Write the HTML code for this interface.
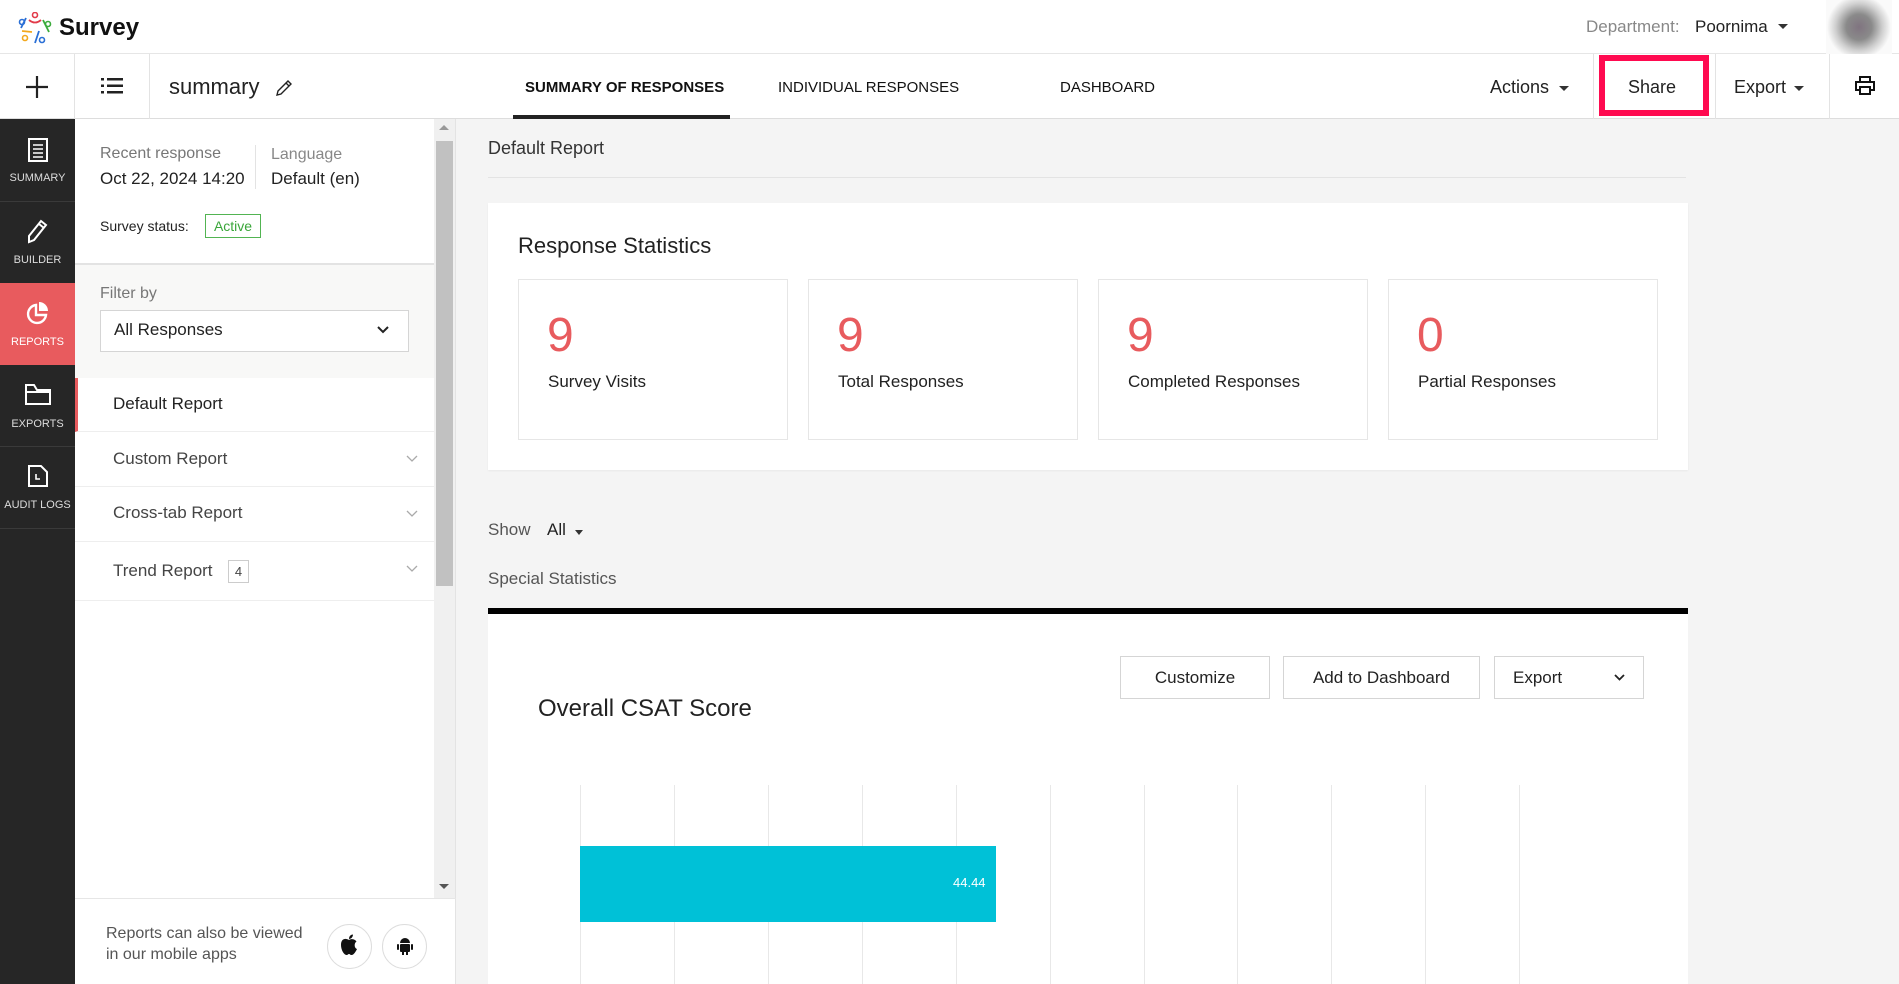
<!DOCTYPE html>
<html><head><meta charset="utf-8"><style>
*{box-sizing:border-box;margin:0;padding:0}
body{width:1899px;height:984px;overflow:hidden;position:relative;font-family:"Liberation Sans",sans-serif;background:#f4f4f4;color:#222}
.a{position:absolute}
.t{position:absolute;white-space:nowrap}
</style></head><body>
<div class="a" style="left:0;top:0;width:1899px;height:54px;background:#fff;border-bottom:1px solid #e6e6e6"></div>
<svg class="a" style="left:18px;top:12px" width="34" height="32" viewBox="0 0 34 32">
<circle cx="4" cy="10" r="2.5" fill="none" stroke="#2a6fd6" stroke-width="1.6"/><path d="M3 16 L8 6" stroke="#2a6fd6" stroke-width="1.8"/>
<circle cx="17" cy="3" r="2.5" fill="none" stroke="#e23b4a" stroke-width="1.6"/><path d="M11 8 Q17 13 23 8" stroke="#e23b4a" stroke-width="1.8" fill="none"/>
<circle cx="30" cy="12" r="2.5" fill="none" stroke="#3bab3b" stroke-width="1.6"/><path d="M25 8 L31 20" stroke="#3bab3b" stroke-width="1.8"/>
<circle cx="7" cy="26" r="2.5" fill="none" stroke="#f2a81d" stroke-width="1.6"/><path d="M4 19 L14 20" stroke="#f2a81d" stroke-width="1.8"/>
<circle cx="24" cy="28" r="2.5" fill="none" stroke="#2a6fd6" stroke-width="1.6"/><path d="M17 31 L21 19" stroke="#2a6fd6" stroke-width="1.8"/>
</svg>
<div class="t" style="left:59px;top:14px;font-size:24px;font-weight:bold;color:#111">Survey</div>
<div class="t" style="left:1586px;top:17px;font-size:17px;color:#888">Department:</div>
<div class="t" style="left:1695px;top:17px;font-size:17px;color:#222">Poornima</div>
<div class="a" style="left:1778px;top:24px;border:5px solid transparent;border-top-color:#333"></div>
<div class="a" style="left:1826px;top:0;width:66px;height:54px;background:radial-gradient(circle,#807480 0,#8a8a8a 30%,#cfcfcf 55%,#fafafa 75%)"></div>
<div class="a" style="left:0;top:54px;width:1899px;height:65px;background:#fff;border-bottom:1px solid #ddd"></div>
<div class="a" style="left:74px;top:54px;width:1px;height:65px;background:#e3e3e3"></div>
<div class="a" style="left:149px;top:54px;width:1px;height:65px;background:#e3e3e3"></div>
<svg class="a" style="left:26px;top:76px" width="22" height="22" viewBox="0 0 22 22"><path d="M11 0V22M0 11H22" stroke="#222" stroke-width="2.2"/></svg>
<svg class="a" style="left:101px;top:78px" width="22" height="16" viewBox="0 0 22 16"><g fill="#222"><rect x="0" y="0" width="3" height="2.5"/><rect x="6" y="0" width="16" height="2.5"/><rect x="0" y="6.5" width="3" height="2.5"/><rect x="6" y="6.5" width="16" height="2.5"/><rect x="0" y="13" width="3" height="2.5"/><rect x="6" y="13" width="16" height="2.5"/></g></svg>
<div class="t" style="left:169px;top:74px;font-size:22px;color:#222">summary</div>
<svg class="a" style="left:275px;top:79px" width="18" height="18" viewBox="0 0 18 18"><path d="M2 16 L3 12 L13 2 L16 5 L6 15 Z M11 4 L14 7" fill="none" stroke="#222" stroke-width="1.4"/></svg>
<div class="t" style="left:525px;top:79px;font-size:15px;font-weight:bold;color:#111">SUMMARY OF RESPONSES</div>
<div class="a" style="left:513px;top:115px;width:217px;height:4px;background:#222"></div>
<div class="t" style="left:778px;top:79px;font-size:15px;color:#111">INDIVIDUAL RESPONSES</div>
<div class="t" style="left:1060px;top:79px;font-size:15px;color:#111">DASHBOARD</div>
<div class="t" style="left:1490px;top:77px;font-size:18px;color:#222">Actions</div>
<div class="a" style="left:1559px;top:86px;border:5px solid transparent;border-top-color:#333"></div>
<div class="a" style="left:1593px;top:54px;width:1px;height:65px;background:#e3e3e3"></div>
<div class="a" style="left:1599px;top:55px;width:110px;height:61px;border:6px solid #ff0a50"></div>
<div class="t" style="left:1628px;top:77px;font-size:18px;color:#222">Share</div>
<div class="a" style="left:1715px;top:54px;width:1px;height:65px;background:#e3e3e3"></div>
<div class="t" style="left:1734px;top:77px;font-size:18px;color:#222">Export</div>
<div class="a" style="left:1794px;top:86px;border:5px solid transparent;border-top-color:#333"></div>
<div class="a" style="left:1829px;top:54px;width:1px;height:65px;background:#e3e3e3"></div>
<svg class="a" style="left:1855px;top:76px" width="20" height="20" viewBox="0 0 20 20"><g fill="none" stroke="#111" stroke-width="2"><rect x="5" y="1" width="10" height="5"/><rect x="1" y="6" width="18" height="8"/><rect x="5" y="11" width="10" height="7" fill="#fff"/></g></svg>
<div class="a" style="left:0;top:119px;width:75px;height:865px;background:#262626"></div>
<div class="a" style="left:0;top:283px;width:75px;height:82px;background:#e85b5e"></div>
<div class="a" style="left:0;top:201px;width:75px;height:1px;background:#3a3a3a"></div>
<div class="a" style="left:0;top:446px;width:75px;height:1px;background:#3a3a3a"></div>
<div class="a" style="left:0;top:528px;width:75px;height:1px;background:#3a3a3a"></div>
<svg class="a" style="left:27px;top:138px" width="22" height="24" viewBox="0 0 22 24"><rect x="2" y="1" width="18" height="22" fill="none" stroke="#fff" stroke-width="2"/><path d="M6 7h10M6 11h10M6 15h10M6 19h10" stroke="#fff" stroke-width="1.6"/></svg>
<div class="t" style="left:0;width:75px;text-align:center;top:172px;font-size:11px;color:#ddd">SUMMARY</div>
<svg class="a" style="left:26px;top:218px" width="24" height="26" viewBox="0 0 24 26"><path d="M3 24 L3 18 L15 3 L20 7 L8 22 Z M13 6 L18 10" fill="none" stroke="#fff" stroke-width="2"/></svg>
<div class="t" style="left:0;width:75px;text-align:center;top:254px;font-size:11px;color:#ddd">BUILDER</div>
<svg class="a" style="left:26px;top:301px" width="24" height="24" viewBox="0 0 24 24"><path d="M10 4 A9 9 0 1 0 20 14 L10 14 Z" fill="none" stroke="#fff" stroke-width="2.4"/><path d="M13 1 A9 9 0 0 1 22 10 L13 10 Z" fill="#fff"/></svg>
<div class="t" style="left:0;width:75px;text-align:center;top:336px;font-size:11px;color:#fff">REPORTS</div>
<svg class="a" style="left:24px;top:382px" width="28" height="24" viewBox="0 0 28 24"><path d="M2 4 L2 22 L26 22 L26 8 L13 8 L10 3 L2 3 Z M2 10 L26 10" fill="none" stroke="#fff" stroke-width="2"/></svg>
<div class="t" style="left:0;width:75px;text-align:center;top:418px;font-size:11px;color:#ddd">EXPORTS</div>
<svg class="a" style="left:27px;top:464px" width="22" height="24" viewBox="0 0 22 24"><path d="M2 2 L14 2 L20 8 L20 22 L2 22 Z" fill="none" stroke="#fff" stroke-width="2"/><path d="M9 10 L9 15 L13 15" fill="none" stroke="#fff" stroke-width="1.6"/></svg>
<div class="t" style="left:0;width:75px;text-align:center;top:499px;font-size:11px;color:#ddd">AUDIT LOGS</div>
<div class="a" style="left:75px;top:119px;width:381px;height:865px;background:#fff;border-right:1px solid #e3e3e3"></div>
<div class="t" style="left:100px;top:145px;font-size:16px;color:#777">Recent response</div>
<div class="t" style="left:100px;top:169px;font-size:17px;color:#222">Oct 22, 2024 14:20</div>
<div class="a" style="left:255px;top:145px;width:1px;height:44px;background:#e3e3e3"></div>
<div class="t" style="left:271px;top:146px;font-size:16px;color:#888">Language</div>
<div class="t" style="left:271px;top:169px;font-size:17px;color:#222">Default (en)</div>
<div class="t" style="left:100px;top:218px;font-size:14px;color:#222">Survey status:</div>
<div class="a" style="left:205px;top:214px;width:56px;height:24px;border:1px solid #52b452;color:#3aa63a;font-size:14px;text-align:center;line-height:22px">Active</div>
<div class="a" style="left:75px;top:263px;width:359px;height:115px;background:#f8f8f7;border-top:2px solid #e3e3e3"></div>
<div class="t" style="left:100px;top:285px;font-size:16px;color:#777">Filter by</div>
<div class="a" style="left:100px;top:310px;width:309px;height:42px;background:#fff;border:1px solid #d5d5d5"></div>
<div class="t" style="left:114px;top:320px;font-size:17px;color:#222">All Responses</div>
<svg class="a" style="left:377px;top:326px" width="12" height="8" viewBox="0 0 12 8"><path d="M1 1 L6 6 L11 1" fill="none" stroke="#222" stroke-width="2"/></svg>
<div class="a" style="left:75px;top:378px;width:359px;height:54px;border-left:3px solid #e85b5e;border-bottom:1px solid #eee"></div>
<div class="t" style="left:113px;top:394px;font-size:17px;color:#222">Default Report</div>
<div class="a" style="left:75px;top:432px;width:359px;height:55px;border-bottom:1px solid #eee"></div>
<div class="t" style="left:113px;top:449px;font-size:17px;color:#444">Custom Report</div>
<div class="a" style="left:75px;top:487px;width:359px;height:55px;border-bottom:1px solid #eee"></div>
<div class="t" style="left:113px;top:503px;font-size:17px;color:#444">Cross-tab Report</div>
<div class="a" style="left:75px;top:542px;width:359px;height:59px;border-bottom:1px solid #eee"></div>
<div class="t" style="left:113px;top:561px;font-size:17px;color:#444">Trend Report</div>
<div class="a" style="left:228px;top:560px;width:21px;height:23px;border:1px solid #ccc;font-size:13px;text-align:center;line-height:21px;color:#444">4</div>
<svg class="a" style="left:406px;top:455px" width="12" height="8"><path d="M1 1 L6 6 L11 1" fill="none" stroke="#aaa" stroke-width="1.3"/></svg>
<svg class="a" style="left:406px;top:510px" width="12" height="8"><path d="M1 1 L6 6 L11 1" fill="none" stroke="#aaa" stroke-width="1.3"/></svg>
<svg class="a" style="left:406px;top:565px" width="12" height="8"><path d="M1 1 L6 6 L11 1" fill="none" stroke="#aaa" stroke-width="1.3"/></svg>
<div class="a" style="left:434px;top:119px;width:21px;height:779px;background:#f0f0f0"></div>
<div class="a" style="left:436px;top:141px;width:17px;height:445px;background:#c1c1c1"></div>
<div class="a" style="left:439px;top:125px;border:5px solid transparent;border-bottom-color:#999;border-top:0"></div>
<div class="a" style="left:439px;top:884px;border:5px solid transparent;border-top-color:#555;border-bottom:0"></div>
<div class="a" style="left:75px;top:898px;width:381px;height:1px;background:#e6e6e6"></div>
<div class="t" style="left:106px;top:923px;font-size:16px;line-height:21px;color:#555">Reports can also be viewed<br>in our mobile apps</div>
<div class="a" style="left:327px;top:924px;width:45px;height:45px;border:1px solid #ddd;border-radius:50%"></div>
<svg class="a" style="left:339px;top:934px" width="20" height="22" viewBox="0 0 20 22"><path d="M10 6 C7 4 2 4 2 11 C2 16 5 21 7.5 21 C9 21 9 20 10 20 C11 20 11 21 12.5 21 C15 21 17 17 18 15 C15 14 15 9 17.5 7.5 C16 5 12 4.5 10 6 Z" fill="#111"/><path d="M10 5 C10 2 12 0.5 14 0.5 C14 3 12 5 10 5 Z" fill="#111"/></svg>
<div class="a" style="left:382px;top:924px;width:45px;height:45px;border:1px solid #ddd;border-radius:50%"></div>
<svg class="a" style="left:395px;top:936px" width="20" height="20" viewBox="0 0 20 20"><g fill="#111"><path d="M5 7 A5 5 0 0 1 15 7 Z"/><rect x="5" y="8" width="10" height="8" rx="1"/><rect x="2" y="8" width="2" height="6" rx="1"/><rect x="16" y="8" width="2" height="6" rx="1"/><rect x="7" y="15" width="2" height="4"/><rect x="11" y="15" width="2" height="4"/></g></svg>
<div class="t" style="left:488px;top:138px;font-size:18px;color:#333">Default Report</div>
<div class="a" style="left:488px;top:177px;width:1198px;height:1px;background:#e3e3e3"></div>
<div class="a" style="left:488px;top:203px;width:1200px;height:267px;background:#fff;box-shadow:0 1px 2px rgba(0,0,0,.05)"></div>
<div class="t" style="left:518px;top:233px;font-size:22px;color:#222">Response Statistics</div>
<div class="a" style="left:518px;top:279px;width:270px;height:161px;border:1px solid #e6e6e6"></div>
<div class="a" style="left:808px;top:279px;width:270px;height:161px;border:1px solid #e6e6e6"></div>
<div class="a" style="left:1098px;top:279px;width:270px;height:161px;border:1px solid #e6e6e6"></div>
<div class="a" style="left:1388px;top:279px;width:270px;height:161px;border:1px solid #e6e6e6"></div>
<div class="t" style="left:547px;top:308px;font-size:48px;color:#e85b5e">9</div>
<div class="t" style="left:548px;top:372px;font-size:17px;color:#222">Survey Visits</div>
<div class="t" style="left:837px;top:308px;font-size:48px;color:#e85b5e">9</div>
<div class="t" style="left:838px;top:372px;font-size:17px;color:#222">Total Responses</div>
<div class="t" style="left:1127px;top:308px;font-size:48px;color:#e85b5e">9</div>
<div class="t" style="left:1128px;top:372px;font-size:17px;color:#222">Completed Responses</div>
<div class="t" style="left:1417px;top:308px;font-size:48px;color:#e85b5e">0</div>
<div class="t" style="left:1418px;top:372px;font-size:17px;color:#222">Partial Responses</div>
<div class="t" style="left:488px;top:520px;font-size:17px;color:#555">Show</div>
<div class="t" style="left:547px;top:520px;font-size:17px;color:#222">All</div>
<div class="a" style="left:575px;top:530px;border:4px solid transparent;border-top-color:#333;border-top-width:5px"></div>
<div class="t" style="left:488px;top:569px;font-size:17px;color:#555">Special Statistics</div>
<div class="a" style="left:488px;top:608px;width:1200px;height:376px;background:#fff;border-top:6px solid #000"></div>
<div class="a" style="left:1120px;top:656px;width:150px;height:43px;border:1px solid #d5d5d5;background:#fff;font-size:17px;text-align:center;line-height:41px;color:#222">Customize</div>
<div class="a" style="left:1283px;top:656px;width:197px;height:43px;border:1px solid #d5d5d5;background:#fff;font-size:17px;text-align:center;line-height:41px;color:#222">Add to Dashboard</div>
<div class="a" style="left:1494px;top:656px;width:150px;height:43px;border:1px solid #d5d5d5;background:#fff;font-size:17px;line-height:41px;color:#222;padding-left:18px">Export</div>
<svg class="a" style="left:1614px;top:674px" width="11" height="7"><path d="M1 1 L5.5 5.5 L10 1" fill="none" stroke="#222" stroke-width="1.8"/></svg>
<div class="t" style="left:538px;top:695px;font-size:24px;color:#222">Overall CSAT Score</div>
<svg class="a" style="left:578px;top:785px" width="1000" height="199"><g stroke="#e8e8e8" stroke-width="1"><path d="M2.5 0V199M96.5 0V199M190.5 0V199M284.5 0V199M378.5 0V199M472.5 0V199M566.5 0V199M659.5 0V199M753.5 0V199M847.5 0V199M941.5 0V199"/></g></svg>
<div class="a" style="left:580px;top:846px;width:416px;height:76px;background:#00c1d7"></div>
<div class="t" style="left:953px;top:875px;font-size:13px;color:#fff">44.44</div>
</body></html>
